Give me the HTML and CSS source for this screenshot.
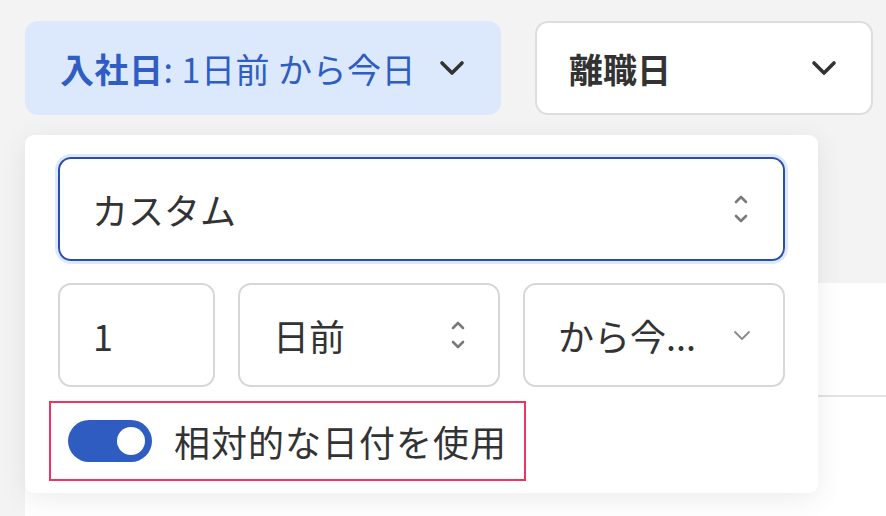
FILE: index.html
```html
<!doctype html>
<html lang="ja">
<head>
    <meta charset="UTF-8">
    <meta name="viewport" content="width=device-width, initial-scale=1.0">
    <title>Filters</title>
    <link rel="stylesheet" href="styles.css">
</head>
<body>
<div class="filters">
    <div class="filter-wrap">
        <button class="filter active">
            <span><b>入社日</b>: 1日前 から今日</span>
            <svg class="chev" width="26" height="16" viewBox="0 0 26 16"><path d="M3 3 L13 13 L23 3" fill="none" stroke="#333" stroke-width="3.6" stroke-linecap="round" stroke-linejoin="round"/></svg>
        </button>

        <!-- dropdown -->
        <div class="panel">
            <div class="select focus">
                <span>カスタム</span>
                <svg class="updown" width="16" height="32" viewBox="0 0 16 32"><path d="M3 9 L8 4 L13 9 M3 23 L8 28 L13 23" fill="none" stroke="#7a7a7a" stroke-width="2.6" stroke-linecap="round" stroke-linejoin="round"/></svg>
            </div>
            <div class="row">
                <div class="field">1</div>
                <div class="field select">
                    <span>日前</span>
                    <svg class="updown" width="16" height="32" viewBox="0 0 16 32"><path d="M3 9 L8 4 L13 9 M3 23 L8 28 L13 23" fill="none" stroke="#7a7a7a" stroke-width="2.6" stroke-linecap="round" stroke-linejoin="round"/></svg>
                </div>
                <div class="field select">
                    <span>から今...</span>
                    <svg width="18" height="12" viewBox="0 0 18 12"><path d="M2 3 L9 10 L16 3" fill="none" stroke="#8a8a8a" stroke-width="1.8" stroke-linecap="round" stroke-linejoin="round"/></svg>
                </div>
            </div>
            <label class="toggle-row">
                <span class="switch"><span class="knob"></span></span>
                <span>相対的な日付を使用</span>
            </label>
        </div>
    </div>
    <button class="filter">
        <span><b>離職日</b></span>
        <svg class="chev" width="26" height="16" viewBox="0 0 26 16"><path d="M3 3 L13 13 L23 3" fill="none" stroke="#333" stroke-width="3.6" stroke-linecap="round" stroke-linejoin="round"/></svg>
    </button>
</div>

<div class="table">
    <div class="table-row"></div>
</div>
</body>
</html>
```
FILE: styles.css
```css
body{
    margin: 0;
    padding: 21px 0 0 25px;
    background: #f3f3f4;
    font-family: "Noto Sans CJK JP", "Noto Sans", sans-serif;
    color: #333;
    height: 516px;
    box-sizing: border-box;
    overflow: hidden;
}
.filters{
    display: flex;
    column-gap: 34px;
}
.filter-wrap{
    position: relative;
}
.filter{
    display: flex;
    align-items: center;
    justify-content: space-between;
    height: 94px;
    box-sizing: border-box;
    border: 2px solid #dddddd;
    border-radius: 13px;
    background: #fff;
    padding: 0 34px 0 32px;
    font-family: inherit;
    font-size: 34px;
    color: #333;
    width: 338px;
}
.filter b{
    font-weight: 700;
}
.filter.active{
    width: 476px;
    background: #dce8fb;
    border-color: #dce8fb;
    color: #2f5dc3;
    padding-left: 33px;
    letter-spacing: 0.5px;
}
.panel{
    position: absolute;
    top: 114px;
    left: 0;
    width: 793px;
    box-sizing: border-box;
    padding: 22px 33px 12px 33px;
    background: #fff;
    border-radius: 9px;
    box-shadow: 0 6px 28px rgba(0,0,0,0.08);
    z-index: 2;
}
.select{
    display: flex;
    align-items: center;
    justify-content: space-between;
}
.select.focus{
    height: 104px;
    box-sizing: border-box;
    border: 2px solid #2b4fa9;
    border-radius: 13px;
    box-shadow: 0 0 0 3px #dce8fb;
    padding: 0 34px 0 32px;
    font-size: 36px;
}
.row{
    display: grid;
    grid-template-columns: 157px 1fr 1fr;
    column-gap: 23px;
    margin-top: 22px;
}
.field{
    height: 104px;
    box-sizing: border-box;
    border: 2px solid #d7d7d7;
    border-radius: 13px;
    padding: 0 32px 0 33px;
    font-size: 36px;
    display: flex;
    align-items: center;
}
.toggle-row{
    display: inline-flex;
    align-items: center;
    column-gap: 22px;
    margin: 14px 0 0 -9px;
    padding: 17px 17px 17px 17px;
    border: 2px solid #f2325f;
    font-size: 36px;
    line-height: 42px;
    letter-spacing: 1px;
}
.switch{
    display: flex;
    align-items: center;
    justify-content: flex-end;
    width: 84px;
    height: 42px;
    box-sizing: border-box;
    padding: 0 7px;
    border-radius: 21px;
    background: #2f5cc1;
}
.knob{
    width: 28px;
    height: 28px;
    border-radius: 50%;
    background: #fff;
}
.table{
    margin-top: 168px;
    background: #fff;
    height: 233px;
}
.table-row{
    height: 112px;
    border-bottom: 2px solid #e4e4e4;
}
```
